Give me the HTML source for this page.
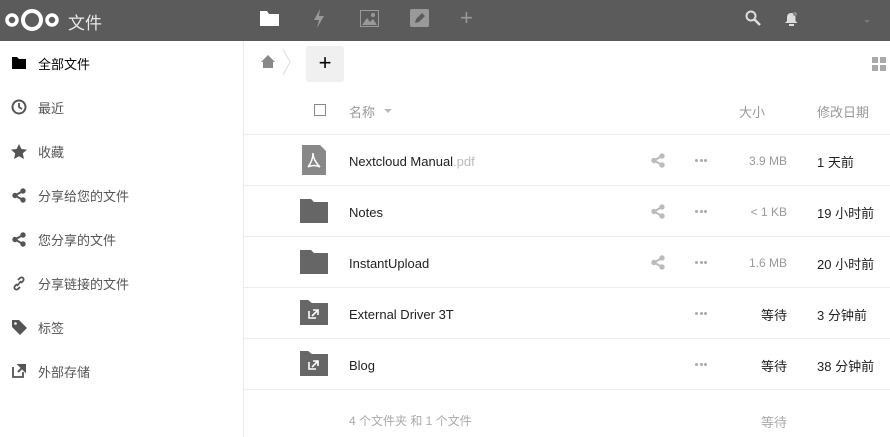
<!DOCTYPE html>
<html><head><meta charset="utf-8"><style>
*{margin:0;padding:0;box-sizing:border-box}
body{width:890px;height:437px;overflow:hidden;background:#fff;font-family:"Liberation Sans","Noto Sans CJK SC",sans-serif;font-size:13px;color:#222;position:relative}
.hdr{position:absolute;left:0;top:0;width:890px;height:41px;background:#5b5b5b}
.abs{position:absolute}
.side{position:absolute;left:0;top:41px;width:244px;height:396px;border-right:1px solid #ebebeb}
.nav{position:absolute;left:0;height:44px;width:243px;display:flex;align-items:center;color:#555}
.nav .ic{width:38px;display:flex;justify-content:center}
.nav span{font-size:13px}
.row{position:absolute;left:244px;width:646px;height:51px;border-bottom:1px solid #ededed}
.row .nm{position:absolute;left:105px;top:19px;font-size:13px;color:#222}
.row .sh{position:absolute;left:407px;top:18px}
.row .dots{position:absolute;left:451px;top:24px;font-size:0}
.dots i{display:inline-block;width:3px;height:3px;border-radius:50%;background:#aaa;margin-right:1.5px}
.row .sz{position:absolute;right:103px;top:19px;color:#999;font-size:12px}
.row .dt{position:absolute;left:573px;top:17px;color:#222}
</style></head><body>
<div class="hdr">
<svg class="abs" style="left:4px;top:7px" width="56" height="26" viewBox="0 0 56 26"><circle cx="8" cy="13" r="5" fill="none" stroke="#fff" stroke-width="3.5"/><circle cx="28" cy="13" r="9" fill="none" stroke="#fff" stroke-width="4"/><circle cx="48" cy="13" r="5" fill="none" stroke="#fff" stroke-width="3.5"/></svg>
<div class="abs" style="left:68px;top:9px;color:#e8e8e8;font-size:17px">文件</div>
<svg class="abs" style="left:260px;top:11px" width="19" height="15"><path d="M0 0h7l2 3h10v12H0z" fill="#fff"/></svg>
<svg class="abs" style="left:312px;top:9px" width="14" height="19"><path d="M8 0L2 11h5l-2 8 7-12H7z" fill="#999"/></svg>
<svg class="abs" style="left:360px;top:10px" width="19" height="17"><rect x="0.5" y="0.5" width="18" height="16" fill="none" stroke="#999"/><path d="M2 15l5-7 3 4 3-3 4 6z" fill="#999"/><circle cx="13" cy="5" r="2" fill="#999"/></svg>
<svg class="abs" style="left:410px;top:9px" width="19" height="18"><rect width="19" height="18" rx="2" fill="#999"/><path d="M5 14l1-4 6-6 3 3-6 6z" fill="#5b5b5b"/></svg>
<div class="abs" style="left:460px;top:5px;color:#999;font-size:22px">+</div>
<svg class="abs" style="left:745px;top:10px" width="17" height="17"><circle cx="6" cy="6" r="4.5" fill="none" stroke="#ddd" stroke-width="2"/><path d="M9 9l6 6" stroke="#ddd" stroke-width="2.5"/></svg>
<svg class="abs" style="left:785px;top:11px" width="13" height="15"><path d="M6.5 2c3 0 4 2 4 5v3l2 2H0l2-2V7c0-3 1-5 4.5-5z" fill="#ddd"/><rect x="4" y="13" width="5" height="2" fill="#ddd"/><circle cx="10" cy="3" r="2" fill="#888"/></svg>
<div class="abs" style="left:864px;top:20px;width:0;height:0;border:3px solid transparent;border-top-color:#777"></div>
</div>
<div class="side">
<div class="nav" style="top:0;color:#000"><div class="ic"><svg width="14" height="12"><path d="M0 0h5l2 2h7v10H0z" fill="#000"/></svg></div><span>全部文件</span></div>
<div class="nav" style="top:44px"><div class="ic"><svg width="16" height="16"><circle cx="8" cy="8" r="6.5" fill="none" stroke="#555" stroke-width="2"/><path d="M8 4v4l3 2" stroke="#555" stroke-width="1.8" fill="none"/></svg></div><span>最近</span></div>
<div class="nav" style="top:88px"><div class="ic"><svg width="16" height="15"><path d="M8 0l2.4 5 5.6.6-4.2 3.8 1.2 5.6L8 12.2 3 15l1.2-5.6L0 5.6 5.6 5z" fill="#555"/></svg></div><span>收藏</span></div>
<div class="nav" style="top:132px"><div class="ic"><svg width="14" height="15"><circle cx="3" cy="7.5" r="2.7" fill="#555"/><circle cx="11" cy="3" r="2.7" fill="#555"/><circle cx="11" cy="12" r="2.7" fill="#555"/><path d="M3 7.5L11 3M3 7.5L11 12" stroke="#555" stroke-width="2"/></svg></div><span>分享给您的文件</span></div>
<div class="nav" style="top:176px"><div class="ic"><svg width="14" height="15"><circle cx="3" cy="7.5" r="2.7" fill="#555"/><circle cx="11" cy="3" r="2.7" fill="#555"/><circle cx="11" cy="12" r="2.7" fill="#555"/><path d="M3 7.5L11 3M3 7.5L11 12" stroke="#555" stroke-width="2"/></svg></div><span>您分享的文件</span></div>
<div class="nav" style="top:220px"><div class="ic"><svg width="14" height="15"><path d="M5 8l-2 2a2 2 0 003 3l2-2M9 7l2-2a2 2 0 00-3-3L6 4M5 10l4-5" stroke="#555" stroke-width="1.8" fill="none"/></svg></div><span>分享链接的文件</span></div>
<div class="nav" style="top:264px"><div class="ic"><svg width="15" height="15"><path d="M0 0h7l8 8-7 7-8-8z" fill="#555"/><circle cx="3.5" cy="3.5" r="1.3" fill="#fff"/></svg></div><span>标签</span></div>
<div class="nav" style="top:308px"><div class="ic"><svg width="14" height="14"><path d="M1 3v10h10V8" stroke="#555" stroke-width="1.8" fill="none"/><path d="M7 1h6v6z M12 2L6 8" stroke="#555" stroke-width="2" fill="#555"/></svg></div><span>外部存储</span></div>
</div>
<svg class="abs" style="left:261px;top:55px" width="14" height="13"><path d="M7 0l7 7h-2v6H2V7H0z" fill="#888"/></svg>
<svg class="abs" style="left:282px;top:48px" width="10" height="28"><path d="M1 1l7 13-7 13" stroke="#ddd" fill="none"/></svg>
<div class="abs" style="left:306px;top:46px;width:38px;height:36px;background:#f0f0f0;border-radius:3px;font-size:22px;text-align:center;line-height:34px;color:#000">+</div>
<svg class="abs" style="left:872px;top:57px" width="14" height="14"><rect width="6" height="6" fill="#aaa"/><rect x="8" width="6" height="6" fill="#aaa"/><rect y="8" width="6" height="6" fill="#aaa"/><rect x="8" y="8" width="6" height="6" fill="#aaa"/></svg>
<div class="row" style="top:84px"><div class="abs" style="left:70px;top:20px;width:12px;height:12px;border:1px solid #888"></div><div class="abs" style="left:105px;top:18px;color:#999">名称</div><div class="abs" style="left:140px;top:25px;border:4px solid transparent;border-top-color:#bbb"></div><div class="abs" style="left:495px;top:18px;color:#999">大小</div><div class="abs" style="left:573px;top:18px;color:#999">修改日期</div></div>
<div class="row" style="top:135px"><svg class="abs" style="left:58px;top:10px" width="24" height="30"><path d="M0 0h18l6 6v24H0z" fill="#888"/><path d="M6 22c3-4 5-9 5-14 0 5 3 10 7 14-4-2-8-2-12 0z" stroke="#fff" stroke-width="1.5" fill="none"/></svg><div class="nm">Nextcloud Manual<span style="color:#bbb">.pdf</span></div><svg class="sh" width="14" height="15"><circle cx="3" cy="7.5" r="2.7" fill="#bbb"/><circle cx="11" cy="3" r="2.7" fill="#bbb"/><circle cx="11" cy="12" r="2.7" fill="#bbb"/><path d="M3 7.5L11 3M3 7.5L11 12" stroke="#bbb" stroke-width="2"/></svg><div class="dots"><i></i><i></i><i></i></div><div class="sz">3.9 MB</div><div class="dt">1 天前</div></div>
<div class="row" style="top:186px"><svg class="abs" style="left:56px;top:13px" width="28" height="24"><path d="M0 0h11l3 3h14v21H0z" fill="#666"/></svg><div class="nm">Notes</div><svg class="sh" width="14" height="15"><circle cx="3" cy="7.5" r="2.7" fill="#bbb"/><circle cx="11" cy="3" r="2.7" fill="#bbb"/><circle cx="11" cy="12" r="2.7" fill="#bbb"/><path d="M3 7.5L11 3M3 7.5L11 12" stroke="#bbb" stroke-width="2"/></svg><div class="dots"><i></i><i></i><i></i></div><div class="sz">&lt; 1 KB</div><div class="dt">19 小时前</div></div>
<div class="row" style="top:237px"><svg class="abs" style="left:56px;top:13px" width="28" height="24"><path d="M0 0h11l3 3h14v21H0z" fill="#666"/></svg><div class="nm">InstantUpload</div><svg class="sh" width="14" height="15"><circle cx="3" cy="7.5" r="2.7" fill="#bbb"/><circle cx="11" cy="3" r="2.7" fill="#bbb"/><circle cx="11" cy="12" r="2.7" fill="#bbb"/><path d="M3 7.5L11 3M3 7.5L11 12" stroke="#bbb" stroke-width="2"/></svg><div class="dots"><i></i><i></i><i></i></div><div class="sz">1.6 MB</div><div class="dt">20 小时前</div></div>
<div class="row" style="top:288px"><svg class="abs" style="left:56px;top:12px" width="28" height="25"><path d="M0 0h7l3 3h14v22H0z" transform="scale(1.17 1)" fill="#666"/><path d="M9 11v7h7M13 10h5v5M18 10l-6 6" stroke="#fff" stroke-width="1.6" fill="none"/></svg><div class="nm">External Driver 3T</div><div class="dots"><i></i><i></i><i></i></div><div class="sz" style="color:#222;font-size:13px;top:17px">等待</div><div class="dt">3 分钟前</div></div>
<div class="row" style="top:339px"><svg class="abs" style="left:56px;top:12px" width="28" height="25"><path d="M0 0h7l3 3h14v22H0z" transform="scale(1.17 1)" fill="#666"/><path d="M9 11v7h7M13 10h5v5M18 10l-6 6" stroke="#fff" stroke-width="1.6" fill="none"/></svg><div class="nm">Blog</div><div class="dots"><i></i><i></i><i></i></div><div class="sz" style="color:#222;font-size:13px;top:17px">等待</div><div class="dt">38 分钟前</div></div>
<div class="abs" style="left:349px;top:412px;color:#aaa;font-size:12px">4 个文件夹 和 1 个文件</div>
<div class="abs" style="left:761px;top:412px;color:#aaa;font-size:13px">等待</div>
</body></html>
